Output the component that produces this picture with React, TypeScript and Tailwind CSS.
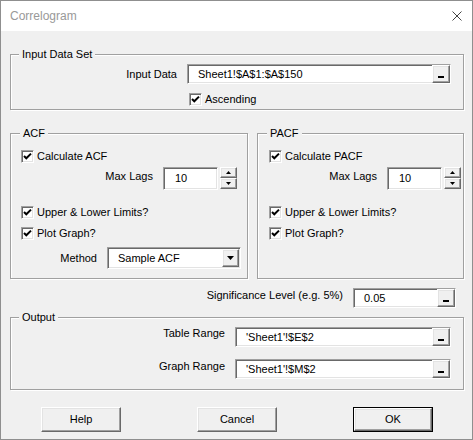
import React from "react";

const sunken =
  "bg-white border border-t-[#a0a0a0] border-l-[#a0a0a0] border-r-white border-b-white shadow-[inset_1px_1px_0_#696969,inset_-1px_-1px_0_#e3e3e3]";
const raised =
  "bg-[#f0f0f0] border border-t-white border-l-white border-r-[#696969] border-b-[#696969] shadow-[inset_-1px_-1px_0_#a0a0a0,inset_1px_1px_0_#e3e3e3]";
const group =
  "border border-[#a0a0a0] shadow-[inset_1px_1px_0_#fff,1px_1px_0_#fff]";

function Check() {
  return (
    <span className={`${sunken} w-[13px] h-[13px] shrink-0 flex items-center justify-center`}>
      <svg width="11" height="11" viewBox="0 0 11 11">
        <path d="M2 5 L4.3 7.3 L9 2.6" stroke="#000" strokeWidth="2" fill="none" />
      </svg>
    </span>
  );
}

function CheckRow({ label, className }: { label: string; className: string }) {
  return (
    <div className={`flex items-center h-[13px] ${className}`}>
      <Check />
      <span className="ml-[3px] leading-[13px] whitespace-nowrap">{label}</span>
    </div>
  );
}

function Dots() {
  return (
    <span className={`${raised} w-[18px] h-full shrink-0 flex items-end justify-center pb-[4px]`}>
      <span className="w-[6px] h-[2px] bg-black" />
    </span>
  );
}

function RefBox({ value, className }: { value: string; className: string }) {
  return (
    <div className={`${sunken} h-[20px] flex items-center justify-between ${className}`}>
      <span className="pl-[10px] leading-[13px] whitespace-nowrap">{value}</span>
      <Dots />
    </div>
  );
}

function Spin({ className }: { className: string }) {
  return (
    <div className={`flex items-start ${className}`}>
      <div className={`${sunken} w-[55px] h-[23px] flex items-center`}>
        <span className="pl-[11px] leading-[13px]">10</span>
      </div>
      <div className="ml-[2px] flex flex-col">
        <span className={`${raised} w-[17px] h-[11px] flex items-center justify-center`}>
          <svg width="5" height="3" viewBox="0 0 5 3">
            <path d="M0 3 L2.5 0 L5 3 Z" fill="#000" />
          </svg>
        </span>
        <span className={`${raised} w-[17px] h-[11px] flex items-center justify-center`}>
          <svg width="5" height="3" viewBox="0 0 5 3">
            <path d="M0 0 L5 0 L2.5 3 Z" fill="#000" />
          </svg>
        </span>
      </div>
    </div>
  );
}

function Btn({ label, def }: { label: string; def?: boolean }) {
  if (def) {
    return (
      <div className="w-[80px] h-[25px] border border-black flex">
        <div className={`${raised} flex-1 flex items-center justify-center leading-[13px]`}>{label}</div>
      </div>
    );
  }
  return (
    <div className={`${raised} w-[80px] h-[25px] flex items-center justify-center leading-[13px]`}>
      {label}
    </div>
  );
}

export default function App() {
  return (
    <div className="w-[473px] h-[440px] border border-[#8f8f8f] bg-[#f0f0f0] flex flex-col font-['Liberation_Sans',Arial,sans-serif] text-[11px] text-black overflow-hidden">
      {/* Title bar */}
      <div className="h-[30px] bg-white flex items-center justify-between pl-[9px] pr-[10px] shrink-0">
        <span className="text-[12px] text-[#999999] leading-[14px]">Correlogram</span>
        <svg width="10" height="10" viewBox="0 0 10 10">
          <path d="M0.5 0.5 L9.5 9.5 M9.5 0.5 L0.5 9.5" stroke="#444" strokeWidth="1" />
        </svg>
      </div>

      <div className="pl-[9px] pr-[8px] flex flex-col">
        {/* Input Data Set */}
        <fieldset className={`${group} mt-[17px] h-[62px]`}>
          <legend className="ml-[8px] px-[3px] leading-[13px] h-[13px] bg-[#f0f0f0]">Input Data Set</legend>
          <div className="mt-[3px] flex items-center h-[20px]">
            <span className="w-[166px] text-right leading-[13px] whitespace-nowrap">Input Data</span>
            <RefBox value="Sheet1!$A$1:$A$150" className="ml-[10px] w-[264px]" />
          </div>
          <CheckRow label="Ascending" className="mt-[9px] ml-[178px]" />
        </fieldset>

        {/* ACF / PACF */}
        <div className="mt-[17px] flex gap-[9px]">
          <fieldset className={`${group} w-[238px] h-[152px]`}>
            <legend className="ml-[9px] px-[3px] leading-[13px] h-[13px] bg-[#f0f0f0]">ACF</legend>
            <CheckRow label="Calculate ACF" className="mt-[10px] ml-[10px]" />
            <div className="mt-[4px] flex items-start h-[23px]">
              <span className="w-[142px] text-right mt-[3px] leading-[13px] whitespace-nowrap">Max Lags</span>
              <Spin className="ml-[10px]" />
            </div>
            <CheckRow label="Upper & Lower Limits?" className="mt-[16px] ml-[10px]" />
            <CheckRow label="Plot Graph?" className="mt-[8px] ml-[10px]" />
            <div className="mt-[7px] flex items-center h-[22px]">
              <span className="w-[86px] text-right leading-[13px] whitespace-nowrap">Method</span>
              <div className={`${sunken} ml-[10px] w-[134px] h-[22px] flex items-center justify-between pr-[1px] py-[1px]`}>
                <span className="pl-[10px] leading-[13px] whitespace-nowrap">Sample ACF</span>
                <span className={`${raised} w-[17px] h-full flex items-center justify-center`}>
                  <svg width="7" height="4" viewBox="0 0 7 4">
                    <path d="M0 0 L7 0 L3.5 4 Z" fill="#000" />
                  </svg>
                </span>
              </div>
            </div>
          </fieldset>

          <fieldset className={`${group} w-[207px] h-[152px]`}>
            <legend className="ml-[9px] px-[3px] leading-[13px] h-[13px] bg-[#f0f0f0]">PACF</legend>
            <CheckRow label="Calculate PACF" className="mt-[10px] ml-[11px]" />
            <div className="mt-[4px] flex items-start h-[23px]">
              <span className="w-[119px] text-right mt-[3px] leading-[13px] whitespace-nowrap">Max Lags</span>
              <Spin className="ml-[10px]" />
            </div>
            <CheckRow label="Upper & Lower Limits?" className="mt-[16px] ml-[11px]" />
            <CheckRow label="Plot Graph?" className="mt-[8px] ml-[11px]" />
          </fieldset>
        </div>

        {/* Significance */}
        <div className="mt-[9px] h-[20px] flex justify-end items-start">
          <span className="mt-[1px] leading-[13px] whitespace-nowrap">Significance Level (e.g. 5%)</span>
          <RefBox value="0.05" className="ml-[10px] w-[103px] mr-[8px]" />
        </div>

        {/* Output */}
        <fieldset className={`${group} mt-[3px] h-[79px]`}>
          <legend className="ml-[8px] px-[3px] leading-[13px] h-[13px] bg-[#f0f0f0]">Output</legend>
          <div className="mt-[3px] flex items-start h-[20px]">
            <span className="w-[214px] text-right leading-[13px] whitespace-nowrap">Table Range</span>
            <RefBox value="'Sheet1'!$E$2" className="ml-[10px] w-[216px]" />
          </div>
          <div className="mt-[12px] flex items-start h-[20px]">
            <span className="w-[214px] text-right mt-[1px] leading-[13px] whitespace-nowrap">Graph Range</span>
            <RefBox value="'Sheet1'!$M$2" className="ml-[10px] w-[216px]" />
          </div>
        </fieldset>

        {/* Buttons */}
        <div className="mt-[17px] pl-[31px] flex gap-[76px]">
          <Btn label="Help" />
          <Btn label="Cancel" />
          <Btn label="OK" def />
        </div>
      </div>
    </div>
  );
}
